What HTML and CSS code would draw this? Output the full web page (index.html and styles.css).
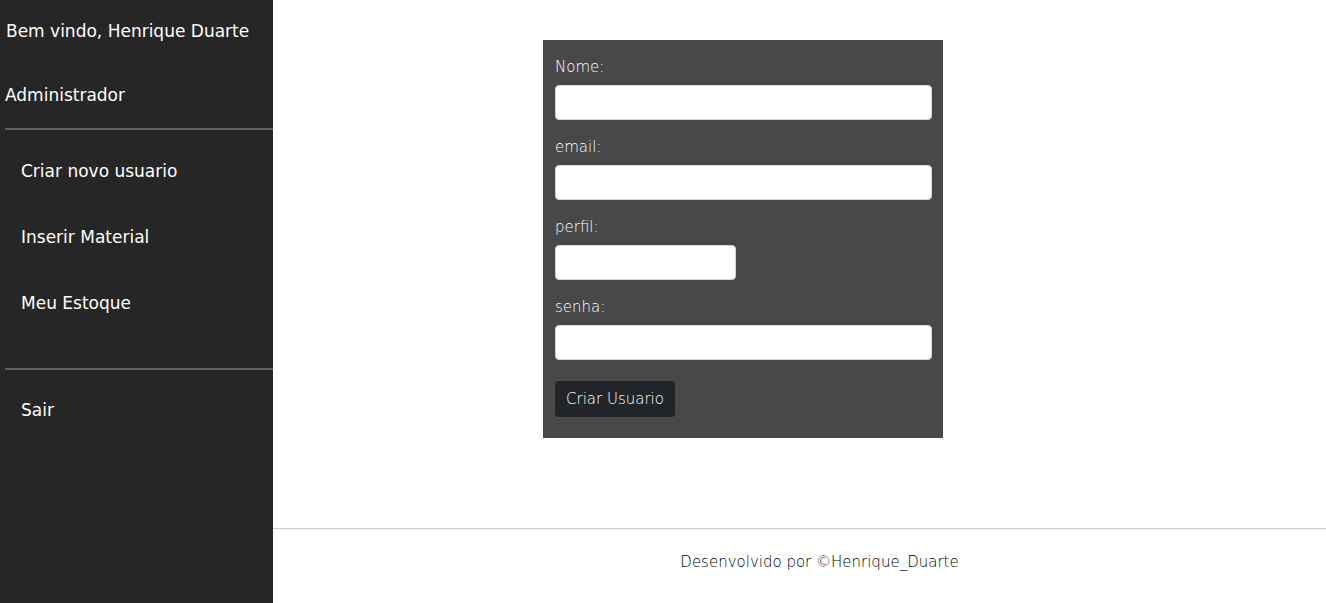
FILE: index.html
```html
<!DOCTYPE html>
<html lang="pt">
<head>
<meta charset="utf-8">
<title>Criar usuario</title>
<link rel="stylesheet" href="styles.css">
</head>
<body>
<aside class="sidebar">
  <div class="welcome">Bem vindo, Henrique Duarte</div>
  <div class="role">Administrador</div>
  <hr class="side-rule">
  <nav class="menu">
    <a class="menu-item" href="#">Criar novo usuario</a>
    <a class="menu-item" href="#">Inserir Material</a>
    <a class="menu-item" href="#">Meu Estoque</a>
  </nav>
  <hr class="side-rule rule-bottom">
  <a class="menu-item exit" href="#">Sair</a>
</aside>
<main class="main">
  <form class="user-form">
    <div class="field">
      <label class="label" for="nome">Nome:</label>
      <input class="input" id="nome" type="text">
    </div>
    <div class="field">
      <label class="label" for="email">email:</label>
      <input class="input" id="email" type="text">
    </div>
    <div class="field">
      <label class="label" for="perfil">perfil:</label>
      <input class="input input-short" id="perfil" type="text">
    </div>
    <div class="field">
      <label class="label" for="senha">senha:</label>
      <input class="input" id="senha" type="password">
    </div>
    <button class="btn" type="button">Criar Usuario</button>
  </form>
  <footer class="footer">Desenvolvido por ©Henrique_Duarte</footer>
</main>
</body>
</html>
```
FILE: styles.css
```css
html, body {
  margin: 0;
  height: 100%;
}
body {
  display: flex;
  background: #ffffff;
  font-family: "DejaVu Sans", Verdana, sans-serif;
}
.sidebar {
  width: 273px;
  flex: none;
  height: 100vh;
  background: #262626;
  color: #ffffff;
  font-size: 17px;
}
.welcome {
  height: 62px;
  line-height: 62px;
  padding-left: 6px;
  white-space: nowrap;
}
.role {
  height: 66px;
  line-height: 66px;
  padding-left: 5px;
}
.side-rule {
  margin: 0 0 0 5px;
  border: 0;
  height: 2px;
  background: #5e5e5e;
}
.menu {
  display: flex;
  flex-direction: column;
  margin-top: 8px;
}
.menu-item {
  display: block;
  height: 66px;
  line-height: 66px;
  padding-left: 21px;
  color: #ffffff;
  text-decoration: none;
}
.rule-bottom {
  margin-top: 32px;
}
.exit {
  margin-top: 7px;
}
.main {
  flex: 1;
  display: flex;
  flex-direction: column;
  height: 100vh;
}
.user-form {
  width: 376px;
  margin: 40px 0 0 270px;
  padding: 17px 12px 21px;
  background: #484848;
  font-family: "DejaVu Sans", sans-serif;
  font-weight: 200;
}
.field {
  margin-bottom: 17px;
}
.field:last-of-type {
  margin-bottom: 0;
}
.label {
  display: block;
  line-height: 20px;
  margin-bottom: 8px;
  font-size: 15px;
  color: #ffffff;
}
.input {
  display: block;
  box-sizing: border-box;
  width: 377px;
  height: 35px;
  margin: 0;
  border: 1px solid #ced4da;
  border-radius: 4px;
  background: #ffffff;
}
.input-short {
  width: 181px;
}
.btn {
  display: block;
  box-sizing: border-box;
  height: 36px;
  width: 120px;
  margin-top: 21px;
  padding: 0;
  border: 0;
  border-radius: 4px;
  background: #212529;
  color: #ffffff;
  font-family: "DejaVu Sans", sans-serif;
  font-weight: 200;
  font-size: 15px;
}
.footer {
  margin-top: auto;
  box-sizing: border-box;
  height: 75px;
  border-top: 1px solid #cccccc;
  padding: 22px 0 0 40px;
  text-align: center;
  font-size: 15px;
  font-weight: 200;
  line-height: 22px;
  color: #000000;
}
```
